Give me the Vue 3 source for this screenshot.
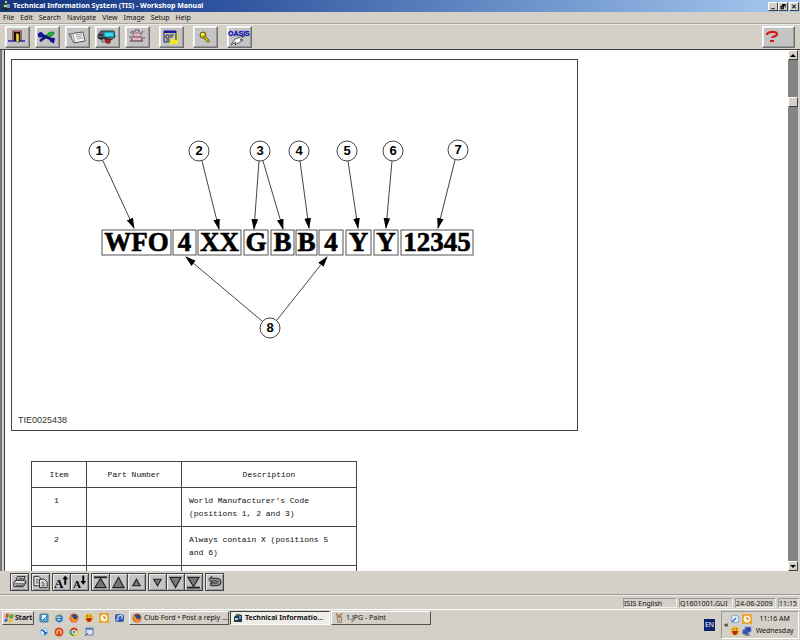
<script setup>
const menus = ['File', 'Edit', 'Search', 'Navigate', 'View', 'Image', 'Setup', 'Help']

const callouts = [
  { n: 1, x: 87, y: 91 },
  { n: 2, x: 187, y: 91 },
  { n: 3, x: 248, y: 91 },
  { n: 4, x: 287, y: 91 },
  { n: 5, x: 335, y: 91 },
  { n: 6, x: 381, y: 91 },
  { n: 7, x: 446, y: 90 },
  { n: 8, x: 258, y: 268 },
]

const arrows = [
  [91, 101, 122, 168],
  [190, 101, 207, 169],
  [247, 101, 242, 169],
  [251, 101, 271, 169],
  [288, 101, 297, 168],
  [336, 101, 346, 168],
  [380, 101, 374, 168],
  [443, 100, 426, 168],
  [250, 261, 174, 197],
  [265, 260, 315, 197],
]

const codes = [
  { t: 'WFO', x: 90, w: 69 },
  { t: '4', x: 161, w: 23 },
  { t: 'XX', x: 186, w: 43 },
  { t: 'G', x: 232, w: 24 },
  { t: 'B', x: 259, w: 23 },
  { t: 'B', x: 284, w: 21 },
  { t: '4', x: 307, w: 24 },
  { t: 'Y', x: 334, w: 25 },
  { t: 'Y', x: 362, w: 24 },
  { t: '12345', x: 389, w: 72 },
]

const rows = [
  { item: '1', part: '', desc: "World Manufacturer's Code (positions 1, 2 and 3)" },
  { item: '2', part: '', desc: 'Always contain X (positions 5 and 6)' },
  { item: '', part: '', desc: '' },
]
</script>

<template>
  <div class="desktop">
    <header class="titlebar">
      <svg class="app-icon" viewBox="0 0 10 10">
        <path d="M1 4 4 1l3 3v5H1z" fill="#284838" />
        <path d="M3 4h3v2H3z" fill="#b8d8a0" />
        <path d="M6 3h3v6H6z" fill="#7890b8" />
        <path d="M1 7h8v2H1z" fill="#202838" />
        <path d="M4 0h2v2H4z" fill="#d0c860" />
      </svg>
      <h1>Technical Information System (TIS) - Workshop Manual</h1>
      <div class="window-controls">
        <button aria-label="Minimize"><svg viewBox="0 0 8 8"><path d="M2 6h4v1H2z" /></svg></button>
        <button aria-label="Restore"><svg viewBox="0 0 8 8"><path d="M3 1h4v4H6V3H3zM1 3h4v4H1zM2 5v1h2V5z" fill-rule="evenodd" /></svg></button>
        <button class="close" aria-label="Close"><svg viewBox="0 0 8 8"><path d="m2 2 4 4m0-4L2 6" stroke="#000" stroke-width="1.2" /></svg></button>
      </div>
    </header>

    <nav class="menubar">
      <button v-for="m in menus" :key="m">{{ m }}</button>
    </nav>

    <div class="toolbar">
      <button aria-label="Exit">
        <svg viewBox="0 0 22 18">
          <path d="M2 13h17" stroke="#1818c8" stroke-width="1.4" />
          <path d="M8 4h6v9H8z" fill="#100808" />
          <path d="M7 13V3h8v10" fill="none" stroke="#802818" stroke-width="1.2" />
          <path d="m10 5 3 1v9l-3-2z" fill="#e8d850" stroke="#504010" stroke-width=".6" />
        </svg>
      </button>
      <button aria-label="Service">
        <svg viewBox="0 0 22 18">
          <path d="M3 5 6 7l11 5" stroke="#101078" stroke-width="2.600" fill="none" />
          <path d="M2 6 3 9l4 0 0-3-2-2M19 11l-3-1-2 3 4 2" fill="#1818b0" stroke="#101078" />
          <path d="m4 13 7-5" stroke="#101078" stroke-width="2.600" />
          <path d="M11 8c0-4 4-4 7-4 0 3-3 6-7 4z" fill="#20b040" stroke="#087020" stroke-width=".7" />
        </svg>
      </button>
      <button aria-label="Documents">
        <svg viewBox="0 0 22 18">
          <path d="m3 6 4 0 2-1 8-1 2 9-11 2z" fill="#f4f4f4" stroke="#303030" stroke-width=".8" />
          <path d="m7 7 2 7M10 7l6-1M10 9l6-1M11 11l6-1M5 7l2 6" stroke="#888" stroke-width=".8" fill="none" />
        </svg>
      </button>
      <button aria-label="Vehicle">
        <svg viewBox="0 0 22 18">
          <path d="M2 7 5 3h13l1 6-4 3H6L2 10z" fill="#667" stroke="#303840" />
          <path d="M8 4h10v5H8z" fill="#38dcec" stroke="#087080" />
          <path d="M3 7h4M3 10h8" stroke="#222" stroke-width="1.400" />
          <path d="M6 11h3v3H6z" fill="#a8b0b8" stroke="#444" stroke-width=".6" />
          <path d="M10 11h4v4h-4z" fill="#d82010" stroke="#401010" stroke-width=".8" />
        </svg>
      </button>
      <button aria-label="Component">
        <svg viewBox="0 0 22 18">
          <path d="M7 5h8v4H7zM6 9h10v4H6z" fill="#e8b8c8" stroke="#806070" stroke-width=".8" />
          <path d="M4 5 7 3v3M17 3l-2 3M3 9h3M16 10h3M4 13h13l-2-2M4 13l2-2M9 4V2h4v2" fill="none" stroke="#604858" stroke-width=".9" />
        </svg>
      </button>
      <button class="gap-before" aria-label="Notes">
        <svg viewBox="0 0 22 18">
          <path d="M11 5h7v11H9z" fill="#f4e820" />
          <path d="M4 3h12v11H4z" fill="#c8cc90" stroke="#101880" />
          <path d="M4 3h12v2H4z" fill="#1818a0" />
          <path d="M6 7h3v3H6zM10 7h4M10 9h3M6 12h4" stroke="#1818a0" fill="#f4e820" />
          <path d="M15 6c-4 3-2 7 3 6v3H9z" fill="#f4e820" />
        </svg>
      </button>
      <button class="gap-before" aria-label="Key">
        <svg viewBox="0 0 22 18">
          <circle cx="9" cy="7" r="3" fill="#d8c820" stroke="#605800" />
          <circle cx="8" cy="6" r="1" fill="#fff" />
          <path d="m11 8 4 4v2h-2l-1-2-3-2z" fill="#c8b818" stroke="#605800" stroke-width=".8" />
        </svg>
      </button>
      <button class="gap-before" aria-label="Oasis">
        <svg viewBox="0 0 22 18">
          <text class="oasis" x="0" y="8">OASIS</text>
          <path d="M16 8 7 11l-4 6 5-3-1 3 8-5-3 0z" fill="#fff" stroke="#333" stroke-width=".8" />
        </svg>
      </button>
      <button class="help" aria-label="Help">
        <svg viewBox="0 0 22 18">
          <path d="M4 7c0-4 10-4 10-1 0 3-5 2-5 4" fill="none" stroke="#d81818" stroke-width="2.200" />
          <path d="M7 12h4v2H7z" fill="#d81818" />
        </svg>
      </button>
    </div>

    <div class="viewer">
      <main class="page">
        <figure>
          <svg viewBox="0 0 565 370">
            <defs>
              <marker id="head" viewBox="0 0 10 6" refX="9" refY="3" markerWidth="11" markerHeight="7" orient="auto" markerUnits="userSpaceOnUse">
                <path d="M0 0 10 3 0 6z" />
              </marker>
            </defs>
            <line v-for="(a, i) in arrows" :key="'a' + i" class="arrow" :x1="a[0]" :y1="a[1]" :x2="a[2]" :y2="a[3]" marker-end="url(#head)" />
            <g v-for="c in callouts" :key="c.n">
              <circle :cx="c.x" :cy="c.y" r="10" />
              <text class="num" :x="c.x" :y="c.y + 4">{{ c.n }}</text>
            </g>
            <g v-for="(c, i) in codes" :key="'c' + i">
              <rect :x="c.x" y="170" :width="c.w" height="25" />
              <text class="code" :x="c.x + c.w / 2" y="191">{{ c.t }}</text>
            </g>
            <text class="ref" x="6" y="363">TIE0025438</text>
          </svg>
        </figure>

        <table>
          <colgroup><col class="c-item"><col class="c-part"><col class="c-desc"></colgroup>
          <thead>
            <tr><th>Item</th><th>Part Number</th><th>Description</th></tr>
          </thead>
          <tbody>
            <tr v-for="(r, i) in rows" :key="i">
              <td class="item">{{ r.item }}</td>
              <td>{{ r.part }}</td>
              <td class="desc">{{ r.desc }}</td>
            </tr>
          </tbody>
        </table>
      </main>
      <div class="scrollbar">
        <button aria-label="Scroll up"><svg viewBox="0 0 8 8"><path d="M4 3 7 6H1z" /></svg></button>
        <div class="track"><div class="thumb"></div></div>
        <button aria-label="Scroll down"><svg viewBox="0 0 8 8"><path d="M4 6 7 3H1z" /></svg></button>
      </div>
    </div>

    <div class="pagebar">
      <div class="group">
        <button aria-label="Print">
          <svg viewBox="0 0 16 16"><path d="m4 7 2-5h8l-2 5M2 8l3-2h9l1 3-3 4H2z" fill="#ddd" stroke="#222" /><path d="M7 4h5M6 6h5M3 10h9M4 12h7l3-4" stroke="#333" fill="none" /></svg>
        </button>
      </div>
      <div class="group">
        <button aria-label="Copy">
          <svg viewBox="0 0 16 16"><path d="M1 2h5l2 2v8H1z" fill="#eee" stroke="#222" /><path d="M7 5h5l3 3v6H7z" fill="#eee" stroke="#222" /><path d="M3 5h3M3 7h3M3 9h3M9 8h3M9 10h4M9 12h4" stroke="#444" /></svg>
        </button>
      </div>
      <div class="group">
        <button aria-label="Larger text">
          <svg viewBox="0 0 16 16"><text class="glyph" x="0" y="14">A</text><path d="M12 1 15 5h-2v6h-2V5H9z" /></svg>
        </button>
        <button aria-label="Smaller text">
          <svg viewBox="0 0 16 16"><text class="glyph small" x="1" y="14">A</text><path d="M12 11 15 7h-2V1h-2v6H9z" /></svg>
        </button>
      </div>
      <div class="group">
        <button aria-label="First"><svg viewBox="0 0 16 16"><path class="tri" d="M8 4 14 14H2z" /><path class="bar" d="M1 3h14" /></svg></button>
        <button aria-label="Page up"><svg viewBox="0 0 16 16"><path class="tri" d="M8 3 14 14H2z" /></svg></button>
        <button aria-label="Up"><svg viewBox="0 0 16 16"><path class="tri" d="M8 5 12 12H4z" /></svg></button>
      </div>
      <div class="group">
        <button aria-label="Down"><svg viewBox="0 0 16 16"><path class="tri" d="M8 12 12 5H4z" /></svg></button>
        <button aria-label="Page down"><svg viewBox="0 0 16 16"><path class="tri" d="M8 14 14 3H2z" /></svg></button>
        <button aria-label="Last"><svg viewBox="0 0 16 16"><path class="tri" d="M8 13 14 3H2z" /><path class="bar" d="M1 14h14" /></svg></button>
      </div>
      <div class="group">
        <button aria-label="Back">
          <svg viewBox="0 0 16 16"><path d="M2 5 5 2v2h6q4 0 4 4t-4 4H4V9h6q1 0 1-1T10 7H5v2z" fill="#888" stroke="#222" /></svg>
        </button>
      </div>
    </div>

    <div class="statusbar">
      <span class="s-lang">ISIS English</span>
      <span class="s-page">Q1601001.GUI</span>
      <span class="s-date">24-06-2009</span>
      <span class="s-time">11:15</span>
    </div>

    <footer class="taskbar">
      <button class="start">
        <svg viewBox="0 0 10 10"><path d="M2 1q2-1 3 0L4 5Q3 4 1 5z" fill="#e05028" /><path d="M6 1q2 1 4 0L9 5Q7 6 5 5z" fill="#58a838" /><path d="M1 6q2-1 3 0L3 9Q2 8 0 9z" fill="#3868c8" /><path d="M5 6q2 1 4 0L8 9Q6 10 4 9z" fill="#e8c030" /></svg>
        Start
      </button>
      <div class="quick">
        <button aria-label="Desktop"><svg viewBox="0 0 10 10"><rect x="1" y="1" width="8" height="8" rx="1" fill="#5aa0cc" stroke="#3878a0" /><path d="M3 2h4v4H3z" fill="#eef8ff" /><path d="m4 7 4-4" stroke="#2878a8" /></svg></button>
        <button aria-label="Browser"><svg viewBox="0 0 10 10"><circle cx="5" cy="5.500" r="3" fill="none" stroke="#2880d0" stroke-width="1.800" /><path d="M3 5.500h5" stroke="#2880d0" /><path d="M1 8C0 5 6 0 9 1" fill="none" stroke="#d8c040" /></svg></button>
        <button aria-label="Firefox"><svg viewBox="0 0 10 10"><circle cx="5" cy="5" r="4.500" fill="#d85818" /><circle cx="5.500" cy="4" r="2.800" fill="#284890" /><path d="M1 3q3 0 4 3 2 1 4-1-1 4-4 4T1 3z" fill="#f09028" /></svg></button>
        <button aria-label="Messenger"><svg viewBox="0 0 10 10"><circle cx="5" cy="5" r="4.500" fill="#f0b830" /><path d="M2 5h6q-1 4-3 4T2 5z" fill="#b02818" /><path d="M3 3h1M6 3h1" stroke="#402000" /></svg></button>
        <button aria-label="Clock"><svg viewBox="0 0 10 10"><rect width="10" height="10" fill="#e8a838" /><circle cx="5" cy="5" r="3" fill="#fff0c0" stroke="#fff" /><path d="M5 3v2h2" fill="none" stroke="#b87818" /></svg></button>
        <button aria-label="Music"><svg viewBox="0 0 10 10"><rect x="1" y="1" width="9" height="8" rx="2" fill="#3858a0" /><path d="M4 7V3l4-1v4" fill="none" stroke="#b8d0f8" stroke-width="1.400" /><circle cx="3" cy="7" r="1.500" fill="#88a8e0" /></svg></button>
        <button aria-label="Sync"><svg viewBox="0 0 10 10"><circle cx="5" cy="5" r="3.500" fill="#e8f4ff" stroke="#88b8e0" /><path d="m2 3 3 1 1 3 2-2" fill="none" stroke="#2868b8" stroke-width="1.600" /></svg></button>
        <button aria-label="Burner"><svg viewBox="0 0 10 10"><circle cx="5" cy="5" r="4.500" fill="#d85020" /><path d="M3 7V4q3-2 4 0v3" fill="none" stroke="#ffe0c0" /></svg></button>
        <button aria-label="Chrome"><svg viewBox="0 0 10 10"><circle cx="5" cy="5" r="4.500" fill="#e8c830" /><path d="M5 5 1 3q4-5 8 0z" fill="#d83020" /><path d="M5 5 1 3q-2 5 4 6z" fill="#38a048" /><circle cx="5" cy="5" r="2" fill="#4888d8" stroke="#fff" /></svg></button>
        <button aria-label="Folder"><svg viewBox="0 0 10 10"><path d="M2 1h7v7H2z" fill="#d8e4f4" stroke="#6880a8" /><path d="M2 2h7" stroke="#4870b8" stroke-width="1.500" /><path d="m1 9 3-3" stroke="#555" /></svg></button>
      </div>
      <div class="tasks">
        <button>
          <svg viewBox="0 0 10 10"><circle cx="5" cy="5" r="4.500" fill="#d85818" /><circle cx="5.500" cy="4" r="2.800" fill="#284890" /><path d="M1 3q3 0 4 3 2 1 4-1-1 4-4 4T1 3z" fill="#f09028" /></svg>
          <span>Club Ford • Post a reply ...</span>
        </button>
        <button class="active">
          <svg viewBox="0 0 10 10"><path d="M1 4 4 1l5 1v7H1z" fill="#203850" /><path d="M2 5h3v2H2z" fill="#b8d8a0" /><path d="M6 3h2v3H6z" fill="#6888d8" /><path d="M3 1h3v2H3z" fill="#507040" /></svg>
          <span>Technical Informatio...</span>
        </button>
        <button>
          <svg viewBox="0 0 10 10"><path d="M3 4h5L7 10H4z" fill="#c8b898" stroke="#706040" stroke-width=".6" /><path d="M4 4 2 0M5 4V1M6 4l2-4" stroke="#905838" /></svg>
          <span>1.JPG - Paint</span>
        </button>
      </div>
      <div class="lang">EN</div>
      <div class="tray">
        <span class="chevron">«</span>
        <div class="tray-icons">
          <svg viewBox="0 0 10 10"><circle cx="5" cy="5" r="4" fill="#e0f0fc" stroke="#78a8d0" /><path d="m2 8 4-4" stroke="#3870b0" stroke-width="1.500" /></svg>
          <svg viewBox="0 0 10 10"><rect width="10" height="10" fill="#e8a838" /><circle cx="5" cy="5" r="3" fill="#fff0c0" stroke="#fff" /><path d="M5 3v2h2" fill="none" stroke="#b87818" /></svg>
          <svg viewBox="0 0 10 10"><circle cx="5" cy="5" r="4.500" fill="#f0b830" /><path d="M2 5h6q-1 4-3 4T2 5z" fill="#b02818" /><path d="M3 3h1M6 3h1" stroke="#402000" /></svg>
          <svg viewBox="0 0 10 10"><path d="M3 1h6v5H3z" fill="#2038b0" stroke="#8098d0" /><path d="M1 4h5v4H1z" fill="#3050c8" stroke="#506090" /><path d="M3 9h5" stroke="#445" /></svg>
        </div>
        <div class="clock"><span>11:16 AM</span><span>Wednesday</span></div>
      </div>
    </footer>
  </div>
</template>

<style>
body {
  margin: 0;
}
</style>

<style scoped>
.desktop {
  display: flex;
  flex-direction: column;
  height: 100vh;
  overflow: hidden;
  background: #d4d0c8;
  color: #111;
  font: 7px/10px "Noto Sans", "Open Sans", sans-serif;
}
* {
  box-sizing: border-box;
}
svg {
  display: block;
}
button {
  margin: 0;
  padding: 0;
  border: 0;
  background: none;
  color: inherit;
  font: inherit;
}

.titlebar {
  display: flex;
  align-items: center;
  gap: 2px;
  height: 12px;
  padding: 0 1px;
  background: linear-gradient(90deg, #14357c, #2a4f9c 25%, #a6caf0);
}
.app-icon {
  width: 10px;
  height: 10px;
}
h1 {
  flex: 1;
  margin: 0;
  color: #fff;
  font-size: 7px;
  font-weight: 700;
  line-height: 12px;
}
.window-controls {
  display: flex;
}
.window-controls button {
  width: 10px;
  height: 9px;
  background: #d4d0c8;
  border: 1px solid;
  border-color: #fff #404040 #404040 #fff;
}
.window-controls .close {
  margin-left: 1px;
}
.window-controls svg {
  width: 8px;
  height: 7px;
}

.menubar {
  display: flex;
  gap: 6px;
  height: 12px;
  padding: 0 3px;
  border-bottom: 1px solid #aaa69e;
}

.toolbar {
  display: flex;
  gap: 5px;
  height: 26px;
  padding: 1px 5px 2px;
  border-top: 1px solid #eceae4;
  border-bottom: 1px solid #404040;
}
.toolbar button {
  width: 25px;
  height: 22px;
  padding: 1px 0;
  background: #c4c4c4;
  border: 1px solid;
  border-color: #fff #707070 #707070 #fff;
  box-shadow: inset -1px -1px #999, inset 1px 1px #eee;
}
.toolbar svg {
  width: 22px;
  height: 18px;
}
.toolbar .gap-before {
  margin-left: 4px;
}
.toolbar .help {
  width: 33px;
  margin-left: auto;
}
.oasis {
  fill: #1018b8;
  stroke: #1018b8;
  stroke-width: .3;
  font: 700 7px "Liberation Sans", sans-serif;
}

.viewer {
  display: flex;
  flex: 1;
  min-height: 0;
  padding-right: 2px;
  border-left: 2px solid #777;
}
.page {
  flex: 1;
  min-width: 0;
  overflow: hidden;
  margin-left: 2px;
  padding: 9px 6px 0;
  background: #fff;
  border-left: 1px solid #404040;
}
figure {
  width: 567px;
  max-width: 100%;
  margin: 0;
  border: 1px solid #444;
}
.arrow {
  stroke: #444;
  stroke-width: 1;
}
figure circle {
  fill: #fff;
  stroke: #444;
  stroke-width: 1;
}
figure rect {
  fill: none;
  stroke: #555;
  stroke-width: 1;
}
.num {
  font: 700 13px "Liberation Sans", sans-serif;
  text-anchor: middle;
}
.code {
  stroke: #000;
  stroke-width: .6;
  font: 700 27px "Liberation Serif", serif;
  text-anchor: middle;
}
.ref {
  fill: #333;
  font: 9px "Liberation Sans", sans-serif;
}

table {
  width: 326px;
  margin: 30px 0 0 20px;
  border-collapse: collapse;
  table-layout: fixed;
  font: 8px/13px "Liberation Mono", monospace;
}
.c-item {
  width: 55px;
}
.c-part {
  width: 95px;
}
th,
td {
  height: 26px;
  padding: 6px 7px;
  border: 1px solid #444;
  font-weight: 400;
  text-align: left;
  vertical-align: top;
}
th {
  text-align: center;
}
.item {
  padding-right: 12px;
  text-align: center;
}
.desc {
  padding-right: 18px;
}

.scrollbar {
  display: flex;
  flex-direction: column;
  width: 10px;
  background: #848484;
}
.scrollbar button,
.thumb {
  height: 10px;
  background: #d4d0c8;
  border: 1px solid;
  border-color: #fff #404040 #404040 #fff;
}
.track {
  flex: 1;
  padding-top: 37px;
}

.pagebar {
  display: flex;
  gap: 2px;
  height: 24px;
  padding: 2px 10px;
  border-bottom: 1px solid #999;
}
.group {
  display: flex;
}
.pagebar button {
  width: 19px;
  height: 18px;
  padding: 0 1px;
  background: #c4c4c4;
  border: 1px solid #444;
  box-shadow: inset 1px 1px #eee, inset -1px -1px #999;
}
.pagebar button + button {
  width: 18px;
  border-left: 0;
}
.pagebar svg {
  width: 15px;
  height: 16px;
}
.glyph {
  font: 700 14px "Liberation Serif", serif;
}
.glyph.small {
  font-size: 12px;
}
.tri {
  fill: #777;
  stroke: #222;
  stroke-width: 1.2;
}
.bar {
  stroke: #222;
  stroke-width: 2;
}

.statusbar {
  display: flex;
  justify-content: flex-end;
  gap: 2px;
  height: 14px;
  padding: 2px 1px 1px;
  border-top: 1px solid #eceae4;
}
.statusbar span {
  border: 1px solid;
  border-color: #999 #eee #eee #999;
  line-height: 9px;
  white-space: nowrap;
}
.s-lang,
.s-page {
  width: 54px;
}
.s-date {
  width: 41px;
}
.s-time {
  width: 21px;
}

.taskbar {
  display: flex;
  height: 31px;
  padding: 1px 1px 1px 2px;
  border-top: 1px solid #fff;
}
.taskbar svg {
  flex: none;
  width: 10px;
  height: 10px;
}
.start,
.tasks button {
  display: flex;
  align-items: center;
  gap: 2px;
  height: 14px;
  padding: 0 2px;
  border: 1px solid;
  border-color: #fff #505050 #505050 #fff;
  white-space: nowrap;
}
.start {
  width: 32px;
  gap: 1px;
  padding: 0 1px;
  font-weight: 700;
}
.quick {
  display: grid;
  grid-template-columns: repeat(6, 15px);
  grid-auto-rows: 14px;
  padding-left: 2px;
}
.quick button {
  display: grid;
  place-items: center;
}
.tasks {
  display: flex;
  flex: 1;
  gap: 1px;
  padding-left: 3px;
}
.tasks button {
  width: 100px;
}
.tasks .active {
  background: #efede9;
  border-color: #404040 #fff #fff #404040;
  font-weight: 700;
}
.lang {
  align-self: center;
  width: 11px;
  height: 12px;
  margin-right: 3px;
  background: #0a246a;
  color: #fff;
  line-height: 12px;
  text-align: center;
}
.tray {
  display: flex;
  align-items: center;
  gap: 2px;
  width: 78px;
  margin-left: 3px;
  padding: 0 3px 0 2px;
  border: 1px solid;
  border-color: #999 #fff #fff #999;
}
.tray-icons {
  display: grid;
  grid-template-columns: 10px 10px;
  gap: 2px;
}
.chevron {
  font-weight: 700;
}
.clock {
  display: flex;
  flex: 1;
  flex-direction: column;
  gap: 2px;
  align-items: center;
}
</style>
